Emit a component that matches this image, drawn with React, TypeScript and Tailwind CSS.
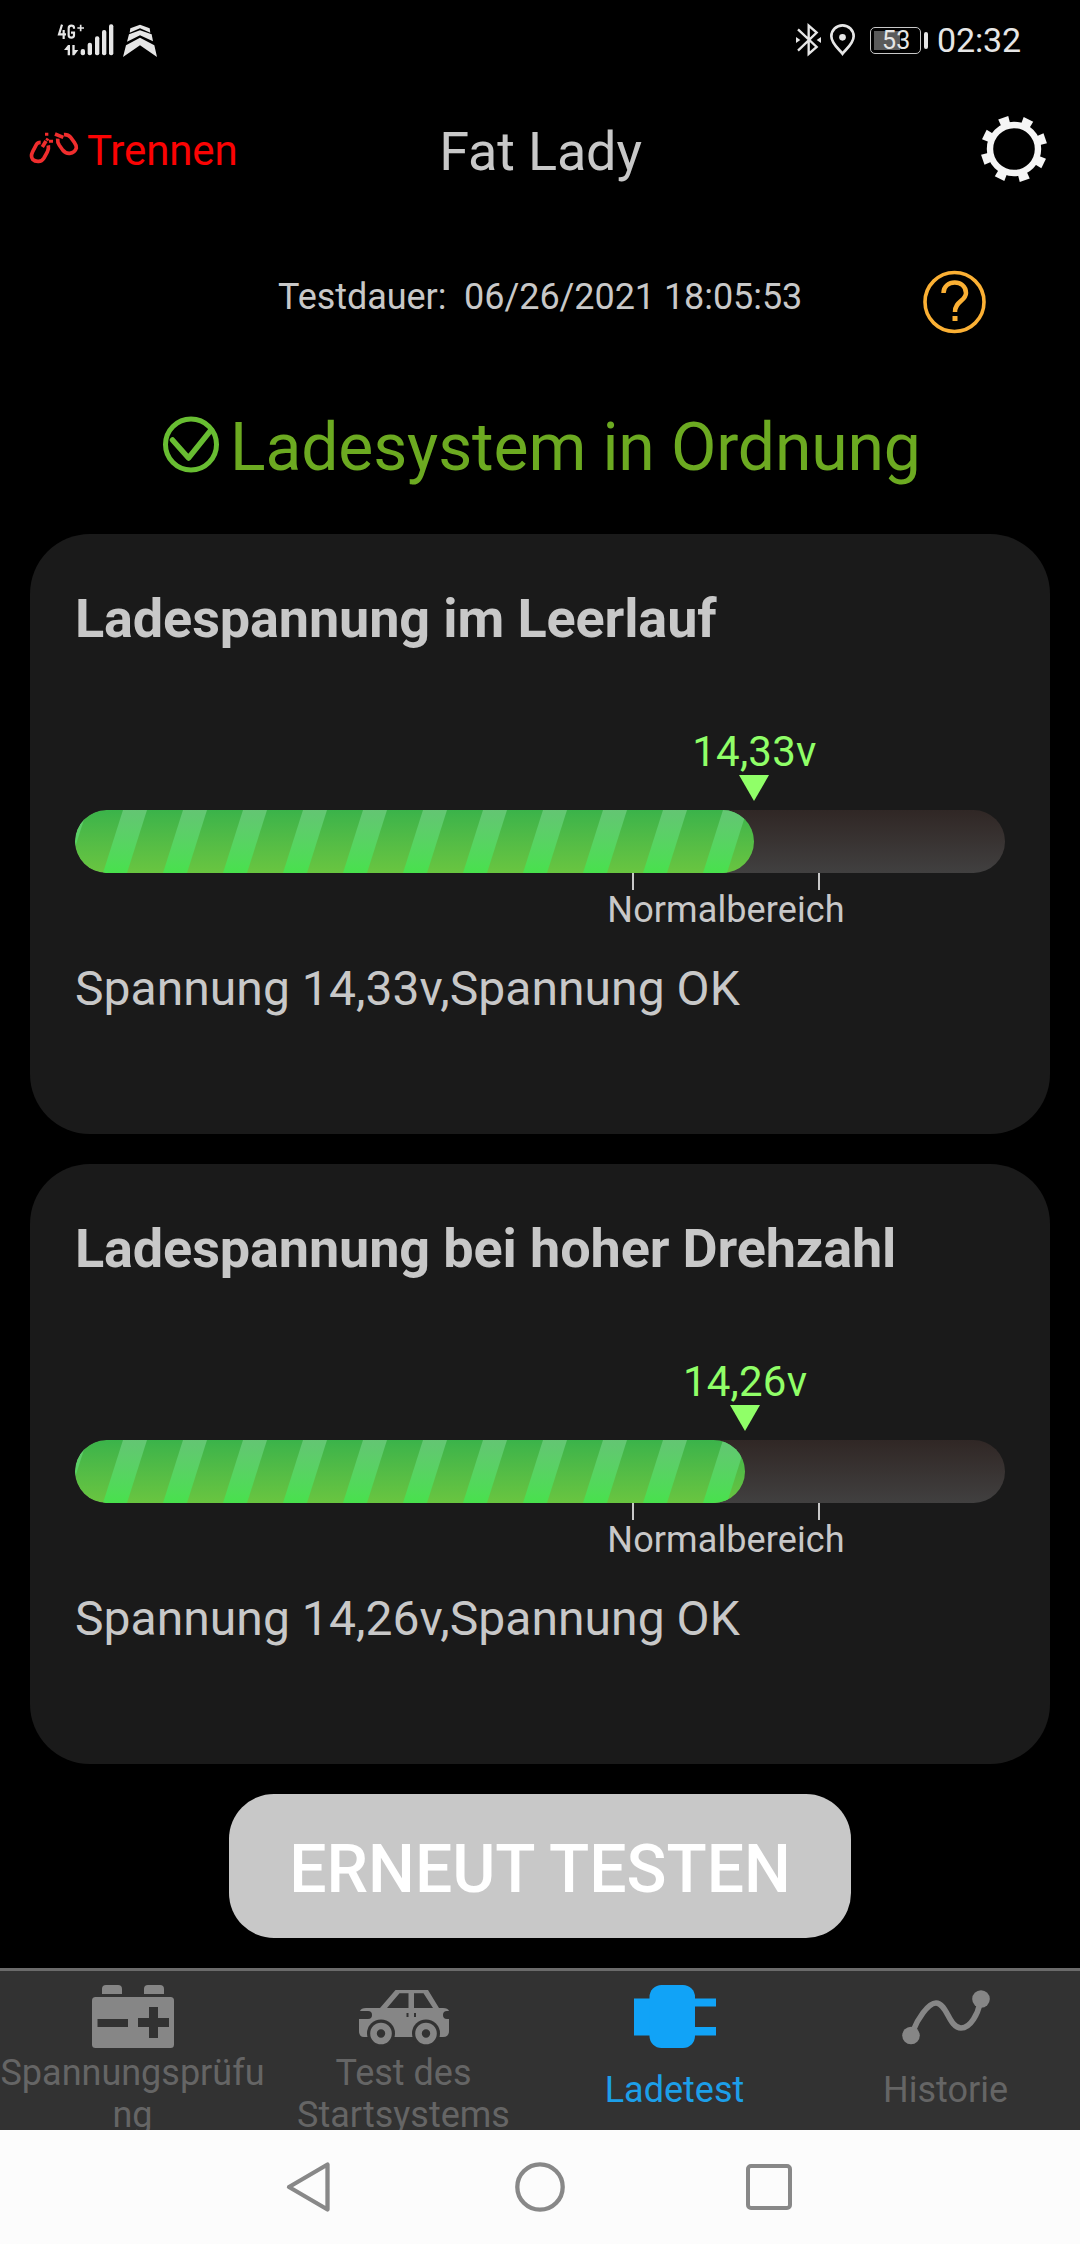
import React from "react";

const STRIPES = Array.from({ length: 12 }, (_, i) => i);
const TEETH = [26, 71, 116, 161, 206, 251, 296, 341];

function SignalIcon() {
  return (
    <svg className="h-[36px] w-[102px]" viewBox="168 66 306 108" fill="#e6e6e6">
      <g fill="none" stroke="#e6e6e6" strokeWidth="6.5">
        <path d="M186 74 L177 103 H198 M191 90 V117" />
        <path d="M222 86 V84 Q222 77 214 77 Q206 77 206 85 V106 Q206 113 214 113 Q222 113 222 106 V98 H213" />
        <path d="M232 84 H252 M242 74 V94" strokeWidth="5" />
      </g>
      <path d="M192 150 L204 135 H210 V166 H203 V150 Z M217 135 H224 V150 H235 L223 166 H217 Z" />
      <rect x="242" y="147" width="13" height="19" rx="6" />
      <rect x="263" y="128" width="13" height="38" rx="6" />
      <rect x="285" y="109" width="13" height="57" rx="6" />
      <rect x="306" y="90" width="13" height="76" rx="6" />
      <rect x="327" y="73" width="13" height="93" rx="6" />
      <path d="M391 85 L420 74 L449 85 L451 98 L420 85 L389 98 Z" />
      <path d="M387 103 L420 91 L455 103 L459 124 L420 106 L381 125 Z" />
      <path d="M378 136 L420 113 L463 136 L471 171 L420 136 L369 171 Z" />
    </svg>
  );
}

function BluetoothIcon() {
  return (
    <svg className="h-[34px] w-[27px]" viewBox="105 69 81 102">
      <path d="M114 88 L170 141 L146 162 V77 L170 98 L114 152" fill="none" stroke="#e6e6e6" strokeWidth="7" />
      <path d="M108 111 L121 120 L108 129 Z M183 111 L170 120 L183 129 Z" fill="#e6e6e6" />
    </svg>
  );
}

function PinIcon() {
  return (
    <svg className="ml-[7px] h-[34px] w-[27px]" viewBox="209 69 81 102">
      <path d="M249.500 161 C241 149 216 132 216 109 A33.500 33 0 0 1 283 109 C283 132 258 149 249.500 161 Z" fill="none" stroke="#e6e6e6" strokeWidth="8" />
      <circle cx="249.500" cy="112" r="10" fill="#e6e6e6" />
    </svg>
  );
}

function GearIcon() {
  return (
    <svg className="h-[70px] w-[70px]" viewBox="-35 -35 70 70">
      <circle r="24" fill="none" stroke="#f5f5f5" strokeWidth="6.4" />
      {TEETH.map((a) => (
        <path key={a} d="M-4.600 -25 L-5.300 -33 H5.300 L4.600 -25 Z" fill="#f5f5f5" transform={`rotate(${a})`} />
      ))}
    </svg>
  );
}

function UnlinkIcon() {
  return (
    <svg className="h-[36px] w-[52px]" viewBox="84 390 156 108">
      <g fill="none" stroke="#f02d2d" strokeWidth="11">
        <path d="M122 427 Q113 427 109 434 L98 455 Q91 469 98 478 Q104 484 114 484 Q125 485 132 474 L142 456 Q147 446 145 436" />
        <path d="M138 423 L127 441" />
        <path d="M173 416 Q172 427 178 436 L188 450 Q197 461 209 460 Q225 458 229 444 Q230 437 223 427 L211 411 Q204 403 192 404" />
        <path d="M165 402 L190 412" />
        <path d="M135 403 H145 M147 424 H159" strokeWidth="9" />
        <path d="M138 416 L146 421" strokeWidth="7" />
      </g>
    </svg>
  );
}

function BatteryIcon() {
  return (
    <svg className="h-[64px] w-[82px] shrink-0" viewBox="0 -1 82 64">
      <path d="M10 9 V4 Q10 0 14 0 H26 Q30 0 30 4 V9 Z M52 9 V4 Q52 0 56 0 H68 Q72 0 72 4 V9 Z" fill="#868686" />
      <rect y="12" width="82" height="51" rx="3.500" fill="#868686" />
      <path d="M5.500 34 H36 V42 H5.500 Z M46 33 H57 V22 H66 V33 H77 V42 H66 V53 H57 V42 H46 Z" fill="#323232" />
    </svg>
  );
}

function CarIcon() {
  return (
    <svg className="h-[64px] w-[90px] shrink-0" viewBox="0 -1 90 64">
      <path d="M21 23 L36.500 5 H69 L80 23 H84 Q89 23 90 26 H88 Q84 26 84 30 Q84 34 88 34 H90 V46 Q90 52 84 52 H5 Q0 52 0 46 V34 H9 Q13 34 13 30 Q13 26 9 26 H1 Q2 23 7 23 Z" fill="#868686" />
      <path d="M28 23 L40.500 8.300 H49.500 V23 Z M55 8.300 H64.500 L74 23 H55 Z" fill="#323232" />
      <path d="M47.500 28 H49.500 V32 H47.500 Z M55 28 H57 V32 H55 Z" fill="#323232" />
      <circle cx="22" cy="48.500" r="14" fill="#323232" />
      <circle cx="67" cy="48.500" r="14" fill="#323232" />
      <circle cx="22" cy="48.500" r="7.500" fill="none" stroke="#868686" strokeWidth="6.600" />
      <circle cx="67" cy="48.500" r="7.500" fill="none" stroke="#868686" strokeWidth="6.600" />
    </svg>
  );
}

function PlugIcon() {
  return (
    <svg className="h-[64px] w-[82px] shrink-0" viewBox="0 -1 82 64" fill="#11a3f7">
      <rect y="13.500" width="20" height="37" />
      <rect x="15.500" width="45.500" height="63" rx="12" />
      <path d="M60 13.500 H82 V21.500 H60 Z M60 42 H82 V50.500 H60 Z" />
    </svg>
  );
}

function HistoryIcon() {
  return (
    <svg className="h-[64px] w-[88px] shrink-0" viewBox="0 -1 88 64">
      <path d="M11 46 C15 35 26 18 34 18 C45 18 47 43 59 43 C69 43 76 28 78 18" fill="none" stroke="#868686" strokeWidth="5.600" />
      <circle cx="9" cy="50.500" r="8.800" fill="#868686" />
      <circle cx="79" cy="14" r="8.800" fill="#868686" />
    </svg>
  );
}

function VoltageCard({ title, value, percent }: { title: string; value: string; percent: number }) {
  return (
    <section className="h-[600px] rounded-[60px] bg-[#1a1a1a] px-[45px] pt-[55px]">
      <h2 className="text-[54px] leading-[60px] font-bold tracking-[-0.130px]">{title}</h2>
      <div className="mt-[79px] flex w-0 flex-col items-center text-[#90ff68]" style={{ marginLeft: `${percent}%` }}>
        <span className="pl-[1px] text-[42px] leading-[48px] tracking-[0.200px] whitespace-nowrap">{value}</span>
        <svg className="-mt-px h-[26px] w-[30px] shrink-0" viewBox="0 0 30 26">
          <path d="M0 0 H30 L15 26 Z" fill="#90ff68" />
        </svg>
      </div>
      <div className="mt-[9px] h-[63px] overflow-hidden rounded-full bg-linear-to-b from-[#302725] to-[#414040]">
        <div
          className="flex h-full gap-[36px] overflow-hidden rounded-full bg-linear-to-b from-[#3ab34a] to-[#69c540]"
          style={{ width: `${percent}%` }}
        >
          {STRIPES.map((i) => (
            <div key={i} className="h-full w-[24px] shrink-0 -translate-x-[22px] -skew-x-[17.600deg] bg-linear-to-b from-[#63c573] to-[#48e14c]" />
          ))}
        </div>
      </div>
      <div className="mx-auto flex w-[188px] translate-x-[186px] flex-col items-center">
        <div className="flex h-[17px] w-full justify-between">
          <div className="w-[2px] bg-[#c8c8c8]" />
          <div className="w-[2px] bg-[#c8c8c8]" />
        </div>
        <span className="text-[36px] leading-[40px] tracking-[0.100px]">Normalbereich</span>
      </div>
      <p className="mt-[29px] text-[48px] leading-[60px] tracking-[0.050px]">
        Spannung {value},Spannung OK
      </p>
    </section>
  );
}

export default function App() {
  return (
    <div className="flex h-[2244px] w-[1080px] flex-col overflow-hidden bg-black font-['Roboto',sans-serif] text-[#c8c8c8]">
      <div className="flex h-[80px] items-center justify-between pr-[59px] pl-[56px] text-[#e6e6e6]">
        <SignalIcon />
        <div className="flex items-center">
          <BluetoothIcon />
          <PinIcon />
          <div className="ml-[14px] flex h-[27px] w-[51px] items-center rounded-[5px] border border-[#c8c8c8] p-[3px]">
            <div className="flex h-full w-[26px] items-center bg-[#5a5a5a]">
              <span className="pl-[8px] text-[25px] leading-none">53</span>
            </div>
          </div>
          <div className="ml-[3px] h-[17px] w-[4px] rounded-full bg-[#e6e6e6]" />
          <span className="ml-[9px] text-[34px] leading-[40px] tracking-[-0.150px]">02:32</span>
        </div>
      </div>

      <header className="grid h-[142px] grid-cols-3 items-center px-[30px]">
        <div className="-ml-[2px] flex items-center text-[42px] text-[#fb0303]">
          <div className="-mt-[6px]"><UnlinkIcon /></div>
          <span className="-mt-px pl-[7px] tracking-[-0.150px]">Trennen</span>
        </div>
        <h1 className="pl-[1px] text-center text-[54px] tracking-[-0.150px]">Fat Lady</h1>
        <div className="-mt-[5px] mr-px justify-self-end"><GearIcon /></div>
      </header>

      <div className="flex h-[150px] items-center pl-[278px]">
        <span className="w-[645px] text-[36px] tracking-[-0.060px] whitespace-pre">Testdauer:  06/26/2021 18:05:53</span>
        <svg className="mt-[10px] h-[64px] w-[64px]" viewBox="0 0 64 64">
          <circle cx="31.500" cy="32" r="29.500" fill="none" stroke="#fbb034" strokeWidth="3.600" />
          <path d="M20.500 23 C20.500 9 43 9 43 23 C43 31 32 31 32 42" fill="none" stroke="#fbb034" strokeWidth="4.500" />
          <rect x="29.500" y="46" width="5" height="5" fill="#fbb034" />
        </svg>
      </div>

      <div className="flex h-[150px] items-center pl-[163px] text-[66px] text-[#6caa21]">
        <svg className="-mt-[6px] h-[57px] w-[57px]" viewBox="0 0 57 57" fill="none" stroke="#68bd32">
          <circle cx="28" cy="28.500" r="25.500" strokeWidth="5" />
          <path d="M9.500 24 L25.500 42 L48 14" strokeWidth="5.500" strokeLinecap="round" strokeLinejoin="round" />
        </svg>
        <span className="pl-[10px] tracking-[-0.130px]">Ladesystem in Ordnung</span>
      </div>

      <main className="mt-[12px] flex flex-col gap-[30px] px-[30px]">
        <VoltageCard title="Ladespannung im Leerlauf" value="14,33v" percent={73} />
        <VoltageCard title="Ladespannung bei hoher Drehzahl" value="14,26v" percent={72} />
        <button className="h-[144px] w-[622px] self-center rounded-[45px] bg-[#c8c8c8] pt-[8px] text-[66px] leading-none font-medium text-white">
          ERNEUT TESTEN
        </button>
      </main>

      <nav className="mt-[30px] flex h-[162px] shrink-0 gap-[4px] overflow-hidden border-t-3 border-[#6a6a6a] bg-[#323232] pt-[13px] text-center text-[36px] leading-[42px] text-[#656565]">
        <div className="-ml-px flex w-[267px] shrink-0 flex-col items-center">
          <BatteryIcon />
          <span className="mt-[4px] w-full break-all">Spannungsprüfung</span>
        </div>
        <div className="flex w-[267px] shrink-0 flex-col items-center">
          <CarIcon />
          <span className="mt-[4px] w-full">Test des Startsystems</span>
        </div>
        <div className="flex w-[267px] shrink-0 flex-col items-center text-[#1c9fe9]">
          <PlugIcon />
          <span className="mt-[21px]">Ladetest</span>
        </div>
        <div className="flex w-[267px] shrink-0 flex-col items-center">
          <HistoryIcon />
          <span className="mt-[21px]">Historie</span>
        </div>
      </nav>

      <div className="flex h-[114px] shrink-0 items-center bg-[#fcfcfc] pl-[286px]">
        <svg className="h-[52px] w-[46px]" viewBox="0 0 46 52" fill="none" stroke="#888" strokeWidth="4.300" strokeLinejoin="round">
          <path d="M3 26 L41.500 3.500 V48.500 Z" />
        </svg>
        <svg className="ml-[182px] h-[52px] w-[52px]" viewBox="0 0 52 52" fill="none" stroke="#888" strokeWidth="4.300">
          <circle cx="26" cy="26" r="22.700" />
        </svg>
        <div className="ml-[180px] h-[46px] w-[46px] rounded-[5px] border-4 border-[#888]" />
      </div>
    </div>
  );
}
